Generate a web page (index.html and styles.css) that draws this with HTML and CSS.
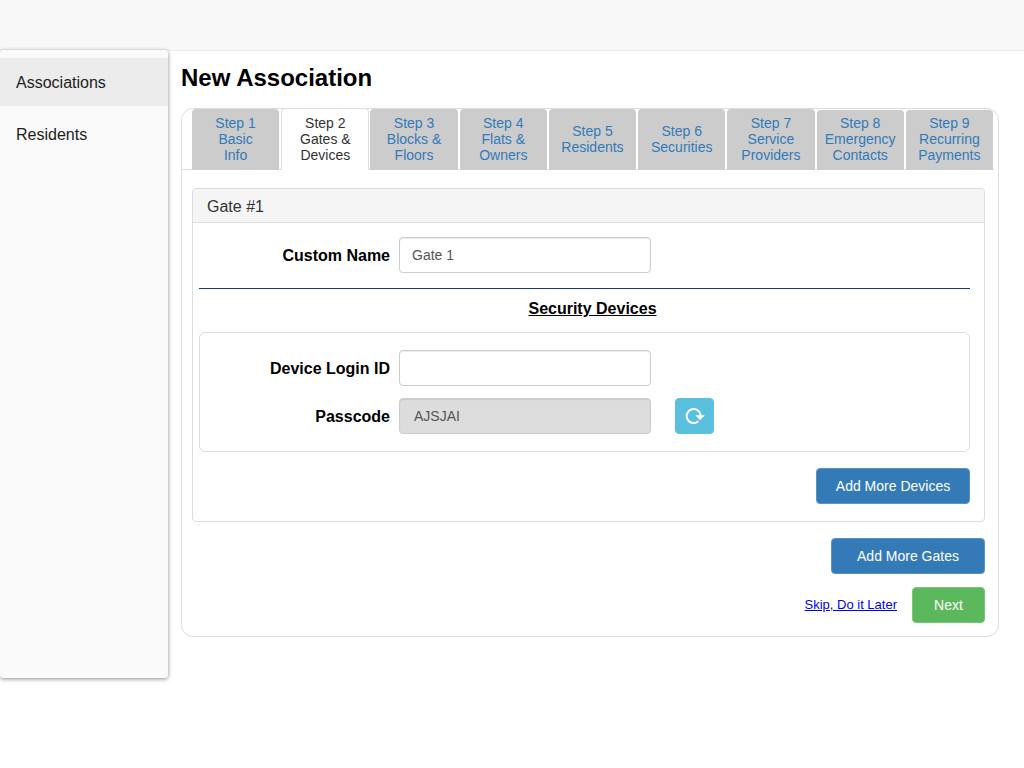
FILE: index.html
```html
<!DOCTYPE html>
<html lang="en">
<head>
<meta charset="utf-8">
<title>New Association</title>
<link rel="stylesheet" href="styles.css">
</head>
<body>
<header class="topbar"></header>
<div class="layout">
  <nav class="sidebar">
    <a class="side-link current" href="#">Associations</a>
    <a class="side-link" href="#">Residents</a>
  </nav>
  <main class="main">
    <h1 class="title">New Association</h1>
    <section class="wizard">
      <nav class="tabs">
        <a class="tab" href="#">Step 1<br>Basic<br>Info</a>
        <a class="tab active" href="#">Step 2<br>Gates &amp;<br>Devices</a>
        <a class="tab" href="#">Step 3<br>Blocks &amp;<br>Floors</a>
        <a class="tab" href="#">Step 4<br>Flats &amp;<br>Owners</a>
        <a class="tab" href="#">Step 5<br>Residents</a>
        <a class="tab" href="#">Step 6<br>Securities</a>
        <a class="tab" href="#">Step 7<br>Service<br>Providers</a>
        <a class="tab low" href="#">Step 8<br>Emergency<br>Contacts</a>
        <a class="tab low" href="#">Step 9<br>Recurring<br>Payments</a>
      </nav>
      <form class="content">
        <section class="gate">
          <h2 class="gate-heading">Gate #1</h2>
          <div class="gate-body">
            <div class="row">
              <label class="label" for="gate-name">Custom Name</label>
              <input class="field" id="gate-name" type="text" value="Gate 1">
            </div>
            <hr class="rule">
            <h3 class="subtitle">Security Devices</h3>
            <div class="device">
              <div class="row">
                <label class="label" for="login-id">Device Login ID</label>
                <input class="field" id="login-id" type="text">
              </div>
              <div class="row">
                <label class="label" for="passcode">Passcode</label>
                <input class="field readonly" id="passcode" type="text" value="AJSJAI" readonly>
                <button class="btn refresh" type="button" aria-label="Refresh passcode">
                  <svg width="20" height="18" viewBox="0 0 20 18" aria-hidden="true">
                    <path d="M13.4 14.2A7 7 0 1 1 15.7 8.6" fill="none" stroke="#fff" stroke-width="2"/>
                    <path d="M10.4 8.2H19.8L15.1 13.2Z" fill="#fff"/>
                  </svg>
                </button>
              </div>
            </div>
            <div class="actions">
              <button class="btn primary" type="button">Add More Devices</button>
            </div>
          </div>
        </section>
        <div class="actions">
          <button class="btn primary" type="button">Add More Gates</button>
        </div>
        <div class="actions final">
          <a class="skip" href="#">Skip, Do it Later</a>
          <button class="btn success" type="submit">Next</button>
        </div>
      </form>
    </section>
  </main>
</div>
</body>
</html>
```

FILE: styles.css
```css
* {
  box-sizing: border-box;
}

body {
  margin: 0;
  background: #fff;
  color: #000;
  font: 14px/20px "Liberation Sans", Arial, sans-serif;
}

.topbar {
  height: 50px;
  background: #f8f8f8;
  box-shadow: 0 1px 0 #ececec;
}

.layout {
  display: flex;
  align-items: flex-start;
  padding-bottom: 24px;
}

.sidebar {
  position: relative;
  display: flex;
  flex-direction: column;
  flex: none;
  gap: 4px;
  width: 168px;
  min-height: calc(100vh - 140px);
  padding-top: 8px;
  border-radius: 3px;
  background: #fafafa;
  box-shadow: 0 1px 4px rgba(0, 0, 0, 0.45);
}

.side-link {
  padding: 15px 16px 13px;
  color: #212121;
  font-size: 16px;
  text-decoration: none;
}

.side-link.current {
  background: #ececec;
}

.main {
  flex: 1;
  min-width: 0;
  padding: 12px 25px 0 13px;
}

.title {
  margin: 0;
  font-size: 24px;
  line-height: 32px;
}

.wizard {
  margin-top: 14px;
  border: 1px solid #ddd;
  border-radius: 12px;
}

.tabs {
  display: grid;
  grid-template-columns: repeat(9, 1fr);
  gap: 1px;
  height: 61px;
  margin-right: 4px;
  padding-left: 10px;
  border-bottom: 1px solid #ddd;
}

.tab {
  display: flex;
  align-items: center;
  justify-content: center;
  margin-right: 1px;
  padding-bottom: 2px;
  border-radius: 4px 4px 0 0;
  background: #ccc;
  color: #337ab7;
  line-height: 16px;
  text-align: center;
  text-decoration: none;
}

.tab.active {
  height: 62px;
  margin: -1px 0 0;
  border: 1px solid #ddd;
  border-bottom: 0;
  background: #fff;
  color: #333;
}

.tab.low {
  height: 60px;
  margin-top: 1px;
}

.content {
  padding: 18px 13px 13px 10px;
}

.gate {
  border: 1px solid #ddd;
  border-radius: 4px;
}

.gate-heading {
  margin: 0;
  padding: 8px 14px 5px;
  border-bottom: 1px solid #ddd;
  border-radius: 3px 3px 0 0;
  background: #f5f5f5;
  color: #333;
  font-size: 16px;
  font-weight: 400;
}

.gate-body {
  padding: 14px 14px 17px 6px;
}

.row {
  display: flex;
  align-items: center;
}

.label {
  width: 191px;
  padding-top: 2px;
  font-size: 16px;
  font-weight: 700;
  text-align: right;
}

.field {
  width: 252px;
  height: 36px;
  margin-left: 9px;
  padding: 6px 12px;
  border: 1px solid #ccc;
  border-radius: 4px;
  background: #fff;
  box-shadow: inset 0 1px 1px rgba(0, 0, 0, 0.08);
  color: #555;
  font: inherit;
}

.field.readonly {
  padding-left: 14px;
  background: #ddd;
}

.rule {
  margin: 15px 0 0;
  border: 0;
  border-top: 1px solid #1a3388;
}

.subtitle {
  margin: 10px 0 13px;
  padding-left: 16px;
  font-size: 16px;
  text-align: center;
  text-decoration: underline;
}

.device {
  display: flex;
  flex-direction: column;
  gap: 12px;
  padding: 17px 0;
  border: 1px solid #ddd;
  border-radius: 6px;
}

.device .label {
  width: 190px;
}

.btn {
  height: 36px;
  padding: 0;
  border: 1px solid;
  border-radius: 4px;
  color: #fff;
  font: inherit;
}

.primary {
  width: 154px;
  border-color: #5a94c4;
  background: #337ab7;
}

.success {
  width: 73px;
  border-color: #7cc67c;
  background: #5cb85c;
}

.refresh {
  display: flex;
  align-items: center;
  justify-content: center;
  width: 39px;
  margin-left: 24px;
  border-color: #5bc0de;
  background: #5bc0de;
}

.actions {
  display: flex;
  align-items: center;
  justify-content: flex-end;
  margin-top: 16px;
}

.actions.final {
  gap: 15px;
  margin-top: 13px;
}

.skip {
  color: #00e;
  font-size: 13px;
}
```
